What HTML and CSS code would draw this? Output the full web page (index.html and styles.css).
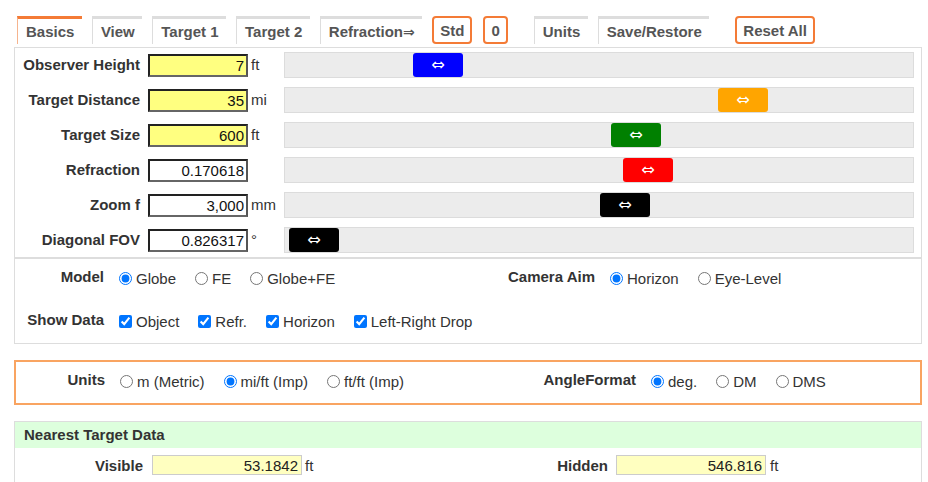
FILE: index.html
```html
<!DOCTYPE html>
<html>
<head>
<meta charset="utf-8">
<title>Earth Curve Calculator</title>
<link rel="stylesheet" href="styles.css">
</head>
<body>
<div class="page">
  <nav class="tabs">
    <span class="tab active">Basics</span>
    <span class="tab">View</span>
    <span class="tab">Target 1</span>
    <span class="tab">Target 2</span>
    <span class="tab">Refraction<span class="arrow">⇒</span></span>
    <span class="btn">Std</span>
    <span class="btn">0</span>
    <span class="tab spaced">Units</span>
    <span class="tab">Save/Restore</span>
    <span class="btn spaced">Reset All</span>
  </nav>

  <section class="panel sliders">
    <div class="srow">
      <label class="slabel">Observer Height</label>
      <input class="num yellow" value="7">
      <span class="unit">ft</span>
      <div class="track"><span class="thumb blue" style="left:128px">⇔</span></div>
    </div>
    <div class="srow">
      <label class="slabel">Target Distance</label>
      <input class="num yellow" value="35">
      <span class="unit">mi</span>
      <div class="track"><span class="thumb orange" style="left:433px">⇔</span></div>
    </div>
    <div class="srow">
      <label class="slabel">Target Size</label>
      <input class="num yellow" value="600">
      <span class="unit">ft</span>
      <div class="track"><span class="thumb green" style="left:326px">⇔</span></div>
    </div>
    <div class="srow">
      <label class="slabel">Refraction</label>
      <input class="num" value="0.170618">
      <span class="unit"></span>
      <div class="track"><span class="thumb red" style="left:338px">⇔</span></div>
    </div>
    <div class="srow">
      <label class="slabel">Zoom f</label>
      <input class="num" value="3,000">
      <span class="unit">mm</span>
      <div class="track"><span class="thumb black" style="left:315px">⇔</span></div>
    </div>
    <div class="srow">
      <label class="slabel">Diagonal FOV</label>
      <input class="num" value="0.826317">
      <span class="unit">°</span>
      <div class="track"><span class="thumb black" style="left:4px">⇔</span></div>
    </div>
  </section>

  <section class="panel options">
    <div class="orow">
      <span class="olabel">Model</span>
      <div class="choices">
        <label class="choice"><input type="radio" name="model" checked>Globe</label>
        <label class="choice"><input type="radio" name="model">FE</label>
        <label class="choice"><input type="radio" name="model">Globe+FE</label>
      </div>
      <span class="olabel">Camera Aim</span>
      <div class="choices">
        <label class="choice"><input type="radio" name="aim" checked>Horizon</label>
        <label class="choice"><input type="radio" name="aim">Eye-Level</label>
      </div>
    </div>
    <div class="orow">
      <span class="olabel">Show Data</span>
      <div class="choices wide">
        <label class="choice"><input type="checkbox" checked>Object</label>
        <label class="choice"><input type="checkbox" checked>Refr.</label>
        <label class="choice"><input type="checkbox" checked>Horizon</label>
        <label class="choice"><input type="checkbox" checked>Left-Right Drop</label>
      </div>
    </div>
  </section>

  <section class="unitsbox">
    <div class="urow">
      <span class="olabel">Units</span>
      <div class="choices">
        <label class="choice"><input type="radio" name="units">m (Metric)</label>
        <label class="choice"><input type="radio" name="units" checked>mi/ft (Imp)</label>
        <label class="choice"><input type="radio" name="units">ft/ft (Imp)</label>
      </div>
      <span class="olabel">AngleFormat</span>
      <div class="choices">
        <label class="choice"><input type="radio" name="angle" checked>deg.</label>
        <label class="choice"><input type="radio" name="angle">DM</label>
        <label class="choice"><input type="radio" name="angle">DMS</label>
      </div>
    </div>
  </section>

  <section class="databox">
    <div class="dhead">Nearest Target Data</div>
    <div class="drow">
      <span class="dlabel">Visible</span>
      <input class="dval" value="53.1842">
      <span class="dunit">ft</span>
      <span class="dlabel">Hidden</span>
      <input class="dval" value="546.816">
      <span class="dunit">ft</span>
    </div>
  </section>
</div>
</body>
</html>
```

FILE: styles.css
```css
* { box-sizing: border-box; }

html, body {
  margin: 0;
  padding: 0;
  background: #fff;
}

body {
  font-family: "Liberation Sans", Arial, "DejaVu Sans", sans-serif;
  font-size: 15px;
  color: #333;
}

.page {
  padding: 16px 6px 0 14px;
}

/* ---------- tabs ---------- */
.tabs {
  display: flex;
  align-items: flex-start;
  gap: 10px;
  margin-left: 3px;
  height: 28px;
  margin-bottom: 3px;
}

.tab {
  border-top: 3px solid #ddd;
  border-left: 1px solid #ddd;
  padding: 1px 7.5px 0 8px;
  line-height: 24px;
  font-weight: bold;
  color: #555;
  white-space: nowrap;
}

.tab.active {
  border-top-color: #f47b36;
  border-left-color: #f6b48e;
}

.arrow {
  font-family: "DejaVu Sans", sans-serif;
  font-size: 14px;
}

.btn {
  border: 2px solid #f47b36;
  border-radius: 4px;
  padding: 1px 6px 0;
  line-height: 23px;
  font-weight: bold;
  color: #555;
  background: #fff;
  white-space: nowrap;
}

.tabs .btn + .btn { margin-left: 1px; }

.tabs .spaced { margin-left: 16px; }
.tabs .btn.spaced { margin-left: 16px; }

/* ---------- panels ---------- */
.panel {
  border: 1px solid #ddd;
}

.sliders {
  display: flex;
  flex-direction: column;
  gap: 9px;
  padding: 4px 7px 4px 0;
}

.srow {
  display: grid;
  grid-template-columns: 133px 100px 36px 1fr;
  align-items: center;
  height: 26px;
}

.slabel {
  text-align: right;
  padding-right: 8px;
  padding-bottom: 1px;
  font-weight: bold;
  color: #333;
  white-space: nowrap;
}

.num {
  width: 100px;
  height: 23px;
  border: 2px solid;
  border-color: #222 #555 #666 #222;
  background: #fff;
  font: 15px "Liberation Sans", Arial, sans-serif;
  color: #111;
  text-align: right;
  padding: 0 2px 0 2px;
  margin: 0;
}

.num.yellow { background: #ffff80; }

.unit {
  padding-left: 3px;
  padding-bottom: 1px;
  color: #333;
}

.track {
  position: relative;
  height: 26px;
  background: #ececec;
  border: 1px solid #dcdcdc;
}

.thumb {
  position: absolute;
  top: 0;
  width: 50px;
  height: 24px;
  border-radius: 3px;
  color: #fff;
  font-family: "DejaVu Sans", sans-serif;
  font-size: 16px;
  line-height: 24px;
  text-align: center;
}

.thumb.blue { background: #0000ff; }
.thumb.orange { background: #ffa500; }
.thumb.green { background: #008000; }
.thumb.red { background: #ff0000; }
.thumb.black { background: #000; }

/* ---------- options ---------- */
.options {
  padding: 6px 0 9px;
  display: flex;
  flex-direction: column;
  gap: 17px;
}

.orow {
  display: grid;
  grid-template-columns: 89px 361px 100px 1fr;
  column-gap: 15px;
  align-items: center;
  height: 26px;
}

.olabel {
  text-align: right;
  font-weight: bold;
  color: #333;
  white-space: nowrap;
  padding-bottom: 3px;
}

.choices {
  display: flex;
  align-items: center;
  gap: 19px;
  white-space: nowrap;
}

.choices.wide { grid-column: 2 / 5; }

.choice {
  display: flex;
  align-items: center;
  gap: 4px;
  color: #333;
}

.choice input {
  margin: 0;
  width: 13px;
  height: 13px;
}

/* ---------- units box ---------- */
.unitsbox {
  margin-top: 16px;
  border: 2px solid #f9a461;
  height: 45px;
  display: flex;
  align-items: center;
  padding-bottom: 3px;
}

.urow {
  display: grid;
  grid-template-columns: 89px 401px 100px 1fr;
  column-gap: 15px;
  align-items: center;
  width: 100%;
}

/* ---------- data box ---------- */
.databox {
  margin-top: 16px;
  border: 1px solid #ddd;
  padding-bottom: 20px;
}

.dhead {
  background: #ddffdd;
  height: 26px;
  line-height: 26px;
  padding-left: 9px;
  font-weight: bold;
  color: #333;
}

.drow {
  display: grid;
  grid-template-columns: 128px 150px 187px 128px 150px 1fr;
  align-items: center;
  margin-top: 7px;
}

.dlabel {
  text-align: right;
  font-weight: bold;
  color: #333;
}

.dval {
  width: 150px;
  height: 20px;
  margin: 0 0 0 9px;
  border: 1px solid #ccc;
  background: #ffffc0;
  font: 15px "Liberation Sans", Arial, sans-serif;
  color: #222;
  text-align: right;
  padding: 0 3px;
}

.drow .dval:nth-of-type(2) { margin-left: 8px; }

.dunit {
  padding-left: 12px;
  color: #333;
}
```
